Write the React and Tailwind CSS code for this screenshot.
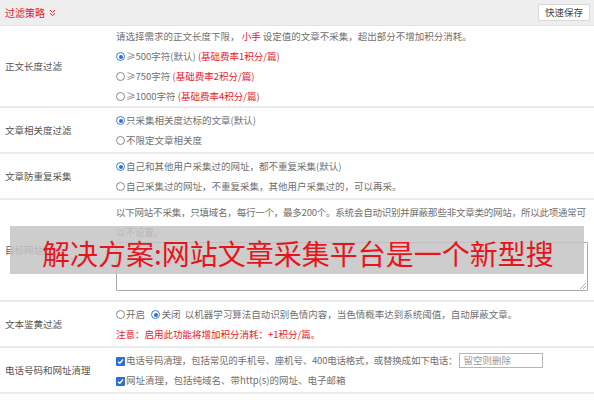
import React from 'react';

const FONT = { fontFamily: '"Noto Sans CJK SC", "Noto Sans", sans-serif' };

function Radio({ on }) {
  return on ? (
    <span className="inline-block w-[9px] h-[9px] rounded-full border border-[#3b7fd9] bg-white mr-[1px] align-[-1px] relative">
      <span className="absolute left-[1.5px] top-[1.5px] w-[4px] h-[4px] rounded-full bg-[#2a6fd6]" />
    </span>
  ) : (
    <span className="inline-block w-[9px] h-[9px] rounded-full border border-[#8a8a8a] bg-white mr-[1px] align-[-1px]" />
  );
}

function Check() {
  return (
    <span className="inline-flex items-center justify-center w-[9px] h-[9px] rounded-[1px] bg-[#2a6fd6] mr-[1px] align-[-1px]">
      <svg width="7" height="7" viewBox="0 0 8 8"><path d="M1.2 4.2 L3.2 6.1 L6.9 1.8" stroke="#fff" strokeWidth="1.6" fill="none" /></svg>
    </span>
  );
}

const Red = ({ children }) => <span className="text-[#e8202a]">{children}</span>;

function Row({ label, children, pad = 'py-[2px]' }) {
  return (
    <div className="flex border-b-2 border-[#ececec]">
      <div className="w-[116px] shrink-0 flex items-center pl-[5px] text-[#555]">{label}</div>
      <div className={`flex-1 ${pad} pr-[6px]`}>{children}</div>
    </div>
  );
}

export default function App() {
  return (
    <div className="relative w-[594px] h-[400px] overflow-hidden bg-white text-[9.5px] leading-[20px] text-[#707070]" style={FONT}>
      <div className="h-[26px] bg-[#eeeeee] flex items-center justify-between pl-[5px] pr-[4px] border-b border-[#e2e2e2]">
        <div className="flex items-center text-[#e8202a] text-[10px]">
          过滤策略
          <svg className="ml-[4px]" width="7" height="8" viewBox="0 0 7 8"><path d="M1 1 L3.5 3.3 L6 1 M1 4.3 L3.5 6.6 L6 4.3" stroke="#e8202a" strokeWidth="1" fill="none" /></svg>
        </div>
        <button className="h-[17px] px-[6px] bg-white border border-[#d8d8d8] rounded-[2px] text-[9.5px] leading-[15px] text-[#444]">快速保存</button>
      </div>

      <Row label="正文长度过滤" pad="py-0">
        <div>请选择需求的正文长度下限， <Red>小手</Red> 设定值的文章不采集，超出部分不增加积分消耗。</div>
        <div><Radio on />≥500字符(默认) <Red>(基础费率1积分/篇)</Red></div>
        <div><Radio />≥750字符 <Red>(基础费率2积分/篇)</Red></div>
        <div><Radio />≥1000字符 <Red>(基础费率4积分/篇)</Red></div>
      </Row>

      <Row label="文章相关度过滤">
        <div><Radio on />只采集相关度达标的文章(默认)</div>
        <div><Radio />不限定文章相关度</div>
      </Row>

      <Row label="文章防重复采集">
        <div><Radio on />自己和其他用户采集过的网址，都不重复采集(默认)</div>
        <div><Radio />自己采集过的网址，不重复采集，其他用户采集过的，可以再采。</div>
      </Row>

      <Row label="目标网站过滤" pad="pt-[2px] pb-[9px]">
        <div className="whitespace-nowrap tracking-[-0.22px]">以下网站不采集，只填域名，每行一个，最多200个。系统会自动识别并屏蔽那些非文章类的网站，所以此项通常可</div>
        <div>以不设置。</div>
        <div className="h-[49px] border border-[#a9a9a9] rounded-[1px] relative">
          <svg className="absolute right-[1px] bottom-[1px]" width="6" height="6" viewBox="0 0 6 6"><path d="M0 6 L6 0 M3 6 L6 3" stroke="#999" strokeWidth="0.8" /></svg>
        </div>
      </Row>

      <Row label="文本鉴黄过滤">
        <div><Radio />开启&nbsp;&nbsp; <Radio on />关闭&nbsp; 以机器学习算法自动识别色情内容，当色情概率达到系统阈值，自动屏蔽文章。</div>
        <div><Red>注意：启用此功能将增加积分消耗：+1积分/篇。</Red></div>
      </Row>

      <Row label="电话号码和网址清理">
        <div className="flex items-center h-[20px]">
          <span className="tracking-[-0.2px]"><Check />电话号码清理，包括常见的手机号、座机号、400电话格式，或替换成如下电话：</span>
          <span className="ml-[2px] w-[84px] h-[15px] border border-[#b5b5b5] px-[3px] leading-[13px] text-[#999]">留空则删除</span>
        </div>
        <div><Check />网址清理，包括纯域名、带http(s)的网址、电子邮箱</div>
      </Row>

      <Row label="图片水印过滤">
        <div><Radio />开启&nbsp;&nbsp; <Radio on />关闭&nbsp; <Red>启用后将自动过滤</Red> <Red>带水印</Red>的图片</div>
      </Row>

      <div className="absolute left-[10px] top-[226px] w-[574px] h-[48px] bg-[#c4c4c4]/85 flex items-center">
        <span className="pl-[32px] pt-[6px] text-[#e8141c] text-[28px] leading-[34px] whitespace-nowrap">解决方案:网站文章采集平台是一个新型搜</span>
      </div>
    </div>
  );
}
